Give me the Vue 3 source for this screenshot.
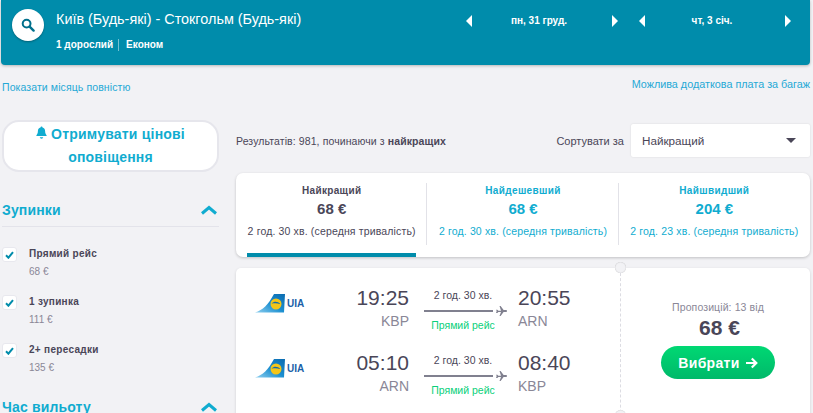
<template>
  <div class="page">
    <header class="topbar">
      <div class="search-btn">
        <svg width="14" height="14" viewBox="0 0 14 14"><circle cx="5.6" cy="5.6" r="3.9" fill="none" stroke="#00708c" stroke-width="2" /><path d="M8.6 8.6l4 4" stroke="#00708c" stroke-width="2.4" stroke-linecap="round" /></svg>
      </div>
      <div class="route">
        <div class="route-name">Київ (Будь-які) - Стокгольм (Будь-які)</div>
        <div class="route-meta"><span class="adults">1 дорослий</span><span>Економ</span></div>
      </div>
      <div class="date date-first">
        <i class="arr-left"></i><span class="date-text">пн, 31 груд.</span><i class="arr-right"></i>
      </div>
      <div class="date date-second">
        <i class="arr-left"></i><span class="date-text">чт, 3 січ.</span><i class="arr-right"></i>
      </div>
    </header>

    <div class="links">
      <a class="month-link">Показати місяць повністю</a>
      <a class="bag-link">Можлива додаткова плата за багаж</a>
    </div>

    <div class="main">
      <aside class="sidebar">
        <button class="alert-btn">
          <svg width="11" height="13" viewBox="0 0 11 13"><path d="M5.5 0.6c.6 0 1 .4 1 .9 1.7.4 2.6 1.8 2.6 3.6 0 2.300.7 3.200 1.500 4.100v.8H.4v-.8c.8-.9 1.500-1.800 1.500-4.100 0-1.800.9-3.200 2.600-3.600 0-.5.4-.9 1-.9z" fill="#10acd0" /><path d="M3.800 11.300h3.400c0 .9-.8 1.400-1.700 1.400s-1.700-.5-1.700-1.400z" fill="#10acd0" /></svg>
          Отримувати цінові оповіщення
        </button>

        <div class="filter-head first">
          <span>Зупинки</span>
          <svg class="chev" width="16" height="10" viewBox="0 0 16 10"><path d="M1 8.500L8 2.500l7 6" fill="none" stroke="#10acd0" stroke-width="3" /></svg>
        </div>
        <div class="stops">
          <label v-for="s in stops" :key="s.name" class="stop">
            <span class="check">
              <svg width="9" height="8" viewBox="0 0 9 8"><path d="M1 4.300l2.400 2.400L8 1.200" fill="none" stroke="#008cab" stroke-width="2" /></svg>
            </span>
            <span>
              <span class="stop-name">{{ s.name }}</span>
              <span class="stop-price">{{ s.price }}</span>
            </span>
          </label>
        </div>

        <div class="filter-head second">
          <span>Час вильоту</span>
          <svg class="chev" width="16" height="10" viewBox="0 0 16 10"><path d="M1 8.500L8 2.500l7 6" fill="none" stroke="#10acd0" stroke-width="3" /></svg>
        </div>
      </aside>

      <section class="content">
        <div class="sort-row">
          <div class="count">Результатів: 981, починаючи з <b>найкращих</b></div>
          <div class="sort">
            <span>Сортувати за</span>
            <div class="select">Найкращий<i class="caret"></i></div>
          </div>
        </div>

        <div class="tabs">
          <div v-for="(t, i) in tabs" :key="t.name" class="tab" :class="{ active: i === 0 }">
            <div class="tab-name">{{ t.name }}</div>
            <div class="tab-price">{{ t.price }}</div>
            <div class="tab-time">{{ t.time }}</div>
          </div>
        </div>

        <div class="result">
          <div class="legs">
            <div v-for="l in legs" :key="l.from" class="leg">
              <div class="airline">
                <svg width="30" height="20" viewBox="0 0 30 20">
                  <defs>
                    <linearGradient id="tail" x1="0" y1="1" x2="1" y2="0">
                      <stop offset="0" stop-color="#8fd0f0" />
                      <stop offset="0.5" stop-color="#1c8fd0" />
                      <stop offset="1" stop-color="#0b6bb0" />
                    </linearGradient>
                  </defs>
                  <path d="M0 19.500C8 17 13 12 19 1h11l-1 18.500z" fill="url(#tail)" />
                  <circle cx="21" cy="11" r="5.500" fill="#f5c518" />
                  <path d="M16.500 10.500c3-2.500 6-2 9 .5-3-1-6-1-9-.5z" fill="#0b6bb0" />
                </svg>
                <span class="uia">UIA</span>
              </div>
              <div class="point from">
                <div class="time">{{ l.dep }}</div>
                <div class="code">{{ l.from }}</div>
              </div>
              <div class="path">
                <div class="dur">2 год. 30 хв.</div>
                <div class="line">
                  <svg class="plane" width="11" height="10" viewBox="0 0 11 10"><path d="M0 3.700l1.300 0 1.100 1h2.600L3.500 0h1.100l3 4h2.200c.7 0 1.200.4 1.200 1s-.5 1-1.200 1H7.600l-3 4H3.500L5 6H2.400l-1.100 1H0l.7-2z" fill="#80808f" /></svg>
                </div>
                <div class="direct">Прямий рейс</div>
              </div>
              <div class="point to">
                <div class="time">{{ l.arr }}</div>
                <div class="code">{{ l.to }}</div>
              </div>
            </div>
          </div>
          <div class="offer">
            <div class="offers">Пропозицій: 13 від</div>
            <div class="price">68 €</div>
            <button class="select-btn">Вибрати
              <svg width="13" height="12" viewBox="0 0 13 12"><path d="M1 6h10M6.800 1.500L11.300 6l-4.500 4.500" fill="none" stroke="#fff" stroke-width="2.200" /></svg>
            </button>
          </div>
        </div>
      </section>
    </div>
  </div>
</template>

<script setup>
const stops = [
  { name: 'Прямий рейс', price: '68 €' },
  { name: '1 зупинка', price: '111 €' },
  { name: '2+ пересадки', price: '135 €' }
]
const tabs = [
  { name: 'Найкращий', price: '68 €', time: '2 год. 30 хв. (середня тривалість)' },
  { name: 'Найдешевший', price: '68 €', time: '2 год. 30 хв. (середня тривалість)' },
  { name: 'Найшвидший', price: '204 €', time: '2 год. 23 хв. (середня тривалість)' }
]
const legs = [
  { dep: '19:25', from: 'KBP', arr: '20:55', to: 'ARN' },
  { dep: '05:10', from: 'ARN', arr: '08:40', to: 'KBP' }
]
</script>

<style scoped>
.page { width: 813px; height: 413px; overflow: hidden; background: #f2f2f5; color: #4a4658; font-family: "Liberation Sans", Arial, sans-serif; font-size: 11px; }

.topbar { height: 65px; margin: 0 3px 0 1px; padding-left: 11px; background: #008cab; border-radius: 0 0 4px 4px; box-shadow: 0 1px 3px rgba(0,0,0,.25); display: flex; color: #fff; box-sizing: border-box; }
.search-btn { width: 32px; height: 32px; margin-top: 9px; border-radius: 50%; background: #fff; box-shadow: 0 1px 2px rgba(0,0,0,.3); display: flex; align-items: center; justify-content: center; flex: none; }
.route { width: 400px; margin-left: 12px; flex: none; }
.route-name { font-size: 14.4px; margin-top: 12px; line-height: 15px; }
.route-meta { margin-top: 12px; font-size: 10px; font-weight: 700; line-height: 12px; display: flex; }
.adults { border-right: 1px solid rgba(255,255,255,.45); padding-right: 5px; margin-right: 7px; }
.date { display: flex; align-items: center; justify-content: space-between; width: 152px; height: 13px; margin-top: 14px; font-size: 10px; font-weight: 700; flex: none; }
.date-first { margin-left: 10px; }
.date-second { margin-left: 21px; }
.date-text { margin-right: 6px; }
.arr-left { border: 6px solid transparent; border-left: 0; border-right: 6px solid #fff; }
.arr-right { border: 6px solid transparent; border-right: 0; border-left: 6px solid #fff; }

.links { display: flex; justify-content: space-between; align-items: flex-start; height: 55px; margin-right: 3px; color: #25a9d6; font-size: 10.8px; }
.month-link { margin: 16px 0 0 2px; font-size: 10.5px; letter-spacing: .1px; }
.bag-link { margin-top: 13px; }

.main { display: flex; }
.sidebar { width: 217px; margin-left: 2px; flex: none; }
.alert-btn { display: block; width: 100%; height: 52px; box-sizing: border-box; border: 2px solid #e6e6ec; border-radius: 17px; background: #fff; color: #10acd0; font: 700 14px/23px "Liberation Sans", Arial, sans-serif; letter-spacing: .2px; padding: 0 24px; text-align: center; }
.filter-head { display: flex; align-items: center; justify-content: space-between; color: #10acd0; font-size: 14px; font-weight: 700; letter-spacing: .15px; }
.filter-head.first { height: 33px; margin-top: 21px; border-bottom: 1px solid #e3e3ea; }
.filter-head.second { margin-top: 8px; }
.filter-head .chev { margin-right: 2px; }
.stops { padding-top: 20px; }
.stop { display: flex; height: 48px; }
.check { width: 15px; height: 15px; margin-right: 12px; background: #fff; border-radius: 3px; border: 1px solid #e8e8ee; box-sizing: border-box; display: flex; align-items: center; justify-content: center; flex: none; }
.stop-name { display: block; font-size: 10px; font-weight: 700; letter-spacing: .3px; line-height: 13px; color: #4a4658; }
.stop-price { display: block; margin-top: 6px; font-size: 10px; line-height: 12px; color: #8a8797; }

.content { width: 574px; margin-left: 17px; padding-top: 4px; flex: none; }
.sort-row { display: flex; align-items: center; justify-content: space-between; height: 33px; margin-bottom: 16px; font-size: 10.5px; }
.count { letter-spacing: .1px; }
.sort { display: flex; align-items: center; gap: 7px; font-size: 11px; }
.select { width: 179px; height: 33px; box-sizing: border-box; padding: 0 14px 0 11px; background: #fff; box-shadow: 0 0 2px rgba(0,0,0,.12); display: flex; align-items: center; justify-content: space-between; font-size: 11.7px; border-radius: 2px; }
.caret { border: 5.500px solid transparent; border-bottom: 0; border-top: 5.500px solid #4a4658; }

.tabs { display: flex; height: 84px; background: #fff; border-radius: 7px; box-shadow: 0 1px 3px rgba(0,0,0,.2); box-sizing: border-box; color: #10acd0; }
.tab { flex: 1; position: relative; text-align: center; padding-top: 11px; white-space: nowrap; }
.tab + .tab::before { content: ""; position: absolute; left: -1px; top: 10px; height: 62px; width: 1px; background: #e2e2e8; }
.tab.active { color: #4a4658; }
.tab.active::after { content: ""; position: absolute; left: 11px; right: 11px; bottom: 0; height: 4px; background: #008cab; }
.tab-name { font-size: 10px; font-weight: 700; letter-spacing: .35px; line-height: 13px; }
.tab-price { font-size: 15px; font-weight: 700; line-height: 16px; margin-top: 4px; }
.tab-time { font-size: 10.5px; letter-spacing: .15px; line-height: 13px; margin-top: 8px; }

.result { display: flex; height: 170px; margin-top: 11px; background: #fff; border-radius: 5px; box-shadow: 0 1px 3px rgba(0,0,0,.15); }
.legs { width: 385px; border-right: 1px dashed #dcdce2; position: relative; padding-top: 19px; box-sizing: border-box; flex: none; }
.legs::before, .legs::after { content: ""; position: absolute; right: -6px; width: 11px; height: 11px; border-radius: 50%; background: #f2f2f5; box-shadow: inset 0 0 1px rgba(0,0,0,.3); }
.legs::before { top: -6px; }
.legs::after { top: 142px; }
.leg { display: flex; height: 65px; }
.airline { width: 73px; margin-left: 19px; margin-top: 6px; display: flex; align-items: flex-start; flex: none; height: 22px; }
.uia { color: #1a5fa8; font-size: 10px; font-weight: 700; margin-left: 2px; margin-top: 5px; }
.point { font-size: 21px; line-height: 22px; flex: none; }
.from { width: 81px; text-align: right; }
.to { margin-left: 2px; }
.code { font-size: 14px; line-height: 16px; margin-top: 4px; color: #8a8797; }
.path { width: 92px; margin-left: 15px; flex: none; text-align: center; font-size: 10.5px; }
.dur { line-height: 13px; margin-top: 2px; padding-right: 14px; }
.line { position: relative; height: 2px; width: 69px; background: #80808f; margin-top: 8px; }
.plane { position: absolute; right: -14px; top: -4px; }
.direct { color: #0ad07a; line-height: 13px; margin-top: 7px; padding-right: 14px; }

.offer { flex: 1; text-align: center; padding-top: 33px; padding-left: 5px; }
.offers { font-size: 10.5px; line-height: 13px; color: #8a8797; letter-spacing: .1px; }
.price { font-size: 21px; font-weight: 700; line-height: 24px; margin-top: 2px; padding-left: 3px; }
.select-btn { width: 114px; height: 33px; margin-top: 6px; border: 0; border-radius: 17px; background: linear-gradient(#00d873, #00b96a); color: #fff; font: 700 14px "Liberation Sans", Arial, sans-serif; letter-spacing: .3px; display: inline-flex; align-items: center; justify-content: center; gap: 5px; }
</style>
